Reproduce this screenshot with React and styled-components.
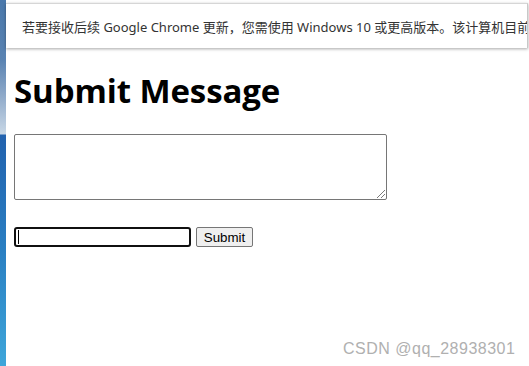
import styled, { createGlobalStyle } from "styled-components";

const Global = createGlobalStyle`
    html, body {
        margin: 0;
        padding: 0;
        background: #fff;
    }
    body {
        width: 529px;
        height: 366px;
        overflow: hidden;
    }
`

const App = () => {
    return (
        <Screen>
            <Global />
            <Strip />
            <Main>
                <InfoBar>
                    <InfoText>若要接收后续 Google Chrome 更新，您需使用 Windows 10 或更高版本。该计算机目前</InfoText>
                </InfoBar>
                <Page>
                    <Title>Submit Message</Title>
                    <Message />
                    <FormRow>
                        <Field>
                            <Caret />
                        </Field>
                        <SubmitButton>Submit</SubmitButton>
                    </FormRow>
                </Page>
            </Main>
            <Watermark>CSDN @qq_28938301</Watermark>
        </Screen>
    )
}

const Screen = styled.div`
    position: relative;
    display: flex;
    width: 529px;
    height: 366px;
    overflow: hidden;
`

const Strip = styled.div`
    width: 6px;
    flex-shrink: 0;
    background: linear-gradient(
        to bottom,
        #4a78ab 0px,
        #5a83b2 60px,
        #8ea9c9 95px,
        #c8d7e6 134px,
        #2262ae 135px,
        #2a7fc2 250px,
        #3ea6da 366px
    );
`

const Main = styled.div`
    flex: 1;
    display: flex;
    flex-direction: column;
    min-width: 0;
`

const InfoBar = styled.div`
    height: 44px;
    margin-top: 3px;
    border-top: 1px solid #d6d6d6;
    border-right: 1px solid #c8c8c8;
    margin-right: 1px;
    box-shadow: 0 1px 3px rgba(0, 0, 0, 0.35);
    display: flex;
    align-items: center;
    padding-left: 16px;
    overflow: hidden;
    white-space: nowrap;
`

const InfoText = styled.span`
    font-family: "Noto Sans", "Noto Sans CJK SC", sans-serif;
    font-size: 13px;
    color: #333;
    margin-top: 1px;
`

const Page = styled.div`
    display: flex;
    flex-direction: column;
    align-items: flex-start;
    padding: 0 8px;
`

const Title = styled.h1`
    font-family: "Open Sans", sans-serif;
    font-weight: 700;
    font-size: 33px;
    line-height: 40px;
    margin: 23px 0 0;
    color: #000;
    letter-spacing: -0.1px;
`

const Message = styled.div`
    position: relative;
    margin-top: 23px;
    width: 371px;
    height: 64px;
    border: 1px solid #767676;
    border-radius: 2px;
    &::after {
        content: "";
        position: absolute;
        right: 1px;
        bottom: 1px;
        width: 8px;
        height: 8px;
        background: linear-gradient(135deg,
            transparent 45%, #7a7a7a 45%, #7a7a7a 52%,
            transparent 52%, transparent 70%, #7a7a7a 70%, #7a7a7a 77%, transparent 77%);
    }
`

const FormRow = styled.div`
    display: flex;
    align-items: center;
    gap: 5px;
    margin-top: 27px;
`

const Field = styled.div`
    position: relative;
    box-sizing: border-box;
    width: 177px;
    height: 20px;
    border: 2px solid #101010;
    border-radius: 3px;
`

const Caret = styled.span`
    position: absolute;
    left: 2px;
    top: 1px;
    width: 1px;
    height: 14px;
    background: #000;
`

const SubmitButton = styled.button`
    box-sizing: border-box;
    height: 20px;
    width: 57px;
    padding: 0;
    font-family: "Liberation Sans", Arial, sans-serif;
    font-size: 13.33px;
    color: #000;
    background: #efefef;
    border: 1px solid #767676;
    border-radius: 2px;
`

const Watermark = styled.div`
    position: absolute;
    left: 343px;
    top: 340px;
    font-family: "Liberation Sans", Arial, sans-serif;
    font-size: 16px;
    color: #b0b0b0;
    letter-spacing: 0.5px;
`

export default App
